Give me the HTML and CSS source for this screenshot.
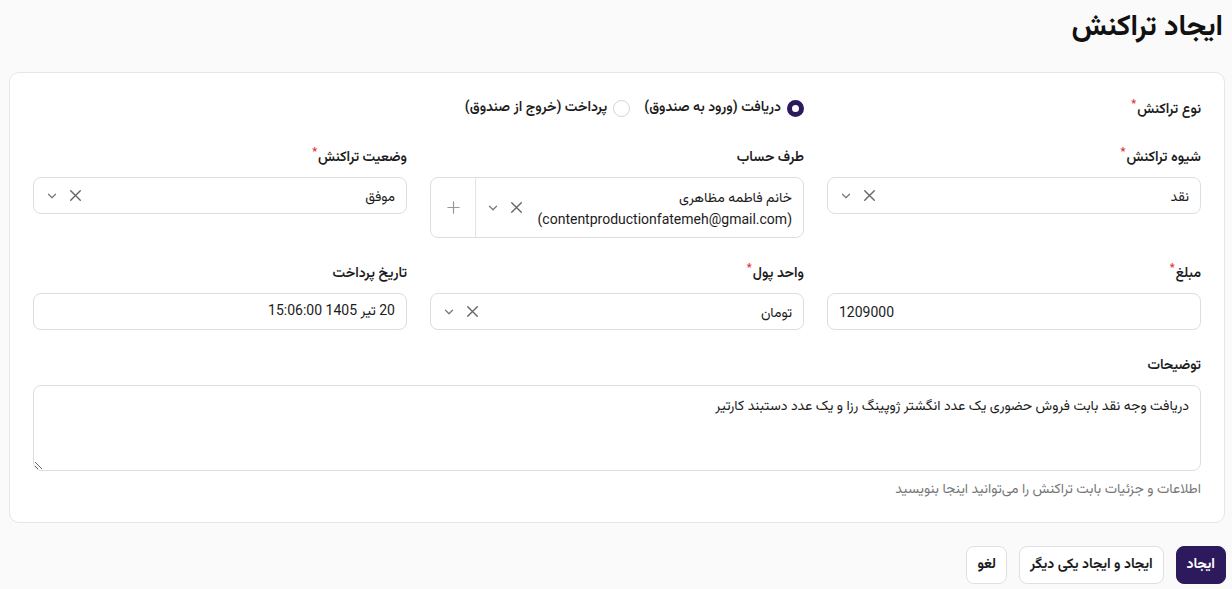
FILE: index.html
```html
<!DOCTYPE html>
<html lang="fa" dir="rtl">
<head>
  <meta charset="UTF-8" />
  <meta name="viewport" content="width=device-width, initial-scale=1.0" />
  <title>ایجاد تراکنش</title>
  <link rel="stylesheet" href="styles.css">
</head>
<body>
  <div class="page">
    <h1 class="page-title">ایجاد تراکنش</h1>

    <form class="card">
      <!-- نوع تراکنش -->
      <div class="type-row">
        <label class="field-label req">نوع تراکنش</label>
        <div class="radios">
          <span class="radio checked"><span class="dot"></span>دریافت (ورود به صندوق)</span>
          <span class="radio"><span class="dot"></span>پرداخت (خروج از صندوق)</span>
        </div>
      </div>

      <div class="grid">
        <div class="field">
          <label class="field-label req">شیوه تراکنش</label>
          <div class="select">
            <span class="value">نقد</span>
            <span class="icons">
              <svg class="x" viewBox="0 0 16 16"><path d="M3.5 3.5l9 9M12.5 3.5l-9 9"/></svg>
              <svg class="chev" viewBox="0 0 16 16"><path d="M4 6l4 4 4-4"/></svg>
            </span>
          </div>
        </div>

        <div class="field">
          <label class="field-label">طرف حساب</label>
          <div class="select tall">
            <span class="value">خانم فاطمه مظاهری<br>(contentproductionfatemeh@gmail.com)</span>
            <span class="icons">
              <svg class="x" viewBox="0 0 16 16"><path d="M3.5 3.5l9 9M12.5 3.5l-9 9"/></svg>
              <svg class="chev" viewBox="0 0 16 16"><path d="M4 6l4 4 4-4"/></svg>
            </span>
            <span class="addon">
              <svg class="plus" viewBox="0 0 16 16"><path d="M8 2v12M2 8h12"/></svg>
            </span>
          </div>
        </div>

        <div class="field">
          <label class="field-label req">وضعیت تراکنش</label>
          <div class="select">
            <span class="value">موفق</span>
            <span class="icons">
              <svg class="x" viewBox="0 0 16 16"><path d="M3.5 3.5l9 9M12.5 3.5l-9 9"/></svg>
              <svg class="chev" viewBox="0 0 16 16"><path d="M4 6l4 4 4-4"/></svg>
            </span>
          </div>
        </div>

        <div class="field">
          <label class="field-label req">مبلغ</label>
          <div class="input ltr">1209000</div>
        </div>

        <div class="field">
          <label class="field-label req">واحد پول</label>
          <div class="select">
            <span class="value">تومان</span>
            <span class="icons">
              <svg class="x" viewBox="0 0 16 16"><path d="M3.5 3.5l9 9M12.5 3.5l-9 9"/></svg>
              <svg class="chev" viewBox="0 0 16 16"><path d="M4 6l4 4 4-4"/></svg>
            </span>
          </div>
        </div>

        <div class="field">
          <label class="field-label">تاریخ پرداخت</label>
          <div class="input">20 تیر 1405 15:06:00</div>
        </div>
      </div>

      <div class="field desc">
        <label class="field-label">توضیحات</label>
        <textarea class="textarea">دریافت وجه نقد بابت فروش حضوری یک عدد انگشتر ژوپینگ رزا و یک عدد دستبند کارتیر</textarea>
        <p class="help">اطلاعات و جزئیات بابت تراکنش را می‌توانید اینجا بنویسید</p>
      </div>
    </form>

    <div class="actions">
      <button class="btn primary">ایجاد</button>
      <button class="btn">ایجاد و ایجاد یکی دیگر</button>
      <button class="btn">لغو</button>
    </div>
  </div>
</body>
</html>
```

FILE: styles.css
```css
* {
  box-sizing: border-box;
}

body {
  margin: 0;
  background: #fafafa;
  color: #1c1c1c;
  font-family: Roboto, Vazirmatn, "Noto Sans Arabic", "Noto Naskh Arabic", "DejaVu Sans", sans-serif;
  font-size: 14px;
}

.page {
  padding: 0 7px 0 9px;
}

.page-title {
  margin: 0;
  padding: 5px 2px 0 0;
  height: 72px;
  line-height: 40px;
  font-size: 29px;
  font-weight: 700;
  color: #111;
}

.card {
  background: #fff;
  border: 1px solid #e6e6e6;
  border-radius: 10px;
  padding: 18px 23px 25px 23px;
}

.field-label {
  display: block;
  font-size: 14px;
  line-height: 20px;
  font-weight: 600;
  color: #1c1c1c;
  margin-bottom: 11px;
}

.req::after {
  content: "*";
  color: #e03131;
  font-size: 11px;
  line-height: 1;
  vertical-align: top;
  margin-right: 1px;
}

.type-row {
  display: grid;
  grid-template-columns: 397px 1fr;
  align-items: center;
  height: 34px;
  margin-bottom: 21px;
}

.type-row .field-label {
  margin: 0;
}

.radios {
  display: flex;
  gap: 14px;
  font-size: 14px;
  font-weight: 600;
}

.radio {
  display: flex;
  align-items: center;
  gap: 6px;
}

.radio .dot {
  width: 17px;
  height: 17px;
  border-radius: 50%;
  border: 1px solid #d4d4d4;
  background: #fff;
}

.radio.checked .dot {
  border: 5px solid #2c1a5c;
  background: #fff;
}

.grid {
  display: grid;
  grid-template-columns: repeat(3, 1fr);
  column-gap: 23px;
  row-gap: 24px;
  align-items: start;
}

.select,
.input {
  display: flex;
  align-items: center;
  height: 37px;
  border: 1px solid #dedede;
  border-radius: 8px;
  background: #fff;
  padding: 0 11px;
  font-size: 14px;
}

.input.ltr {
  direction: ltr;
}

.select .value {
  flex: 1;
  line-height: 22px;
}

.select .icons {
  display: flex;
  align-items: center;
  gap: 8px;
}

.select svg {
  fill: none;
  stroke-linecap: round;
  stroke-linejoin: round;
}

.select .x {
  width: 17px;
  height: 17px;
  stroke: #666;
  stroke-width: 1.3;
}

.select .chev {
  width: 14px;
  height: 14px;
  stroke: #777;
  stroke-width: 1.4;
}

.select.tall {
  height: 61px;
  padding-left: 0;
  align-items: stretch;
}

.select.tall .value,
.select.tall .icons {
  align-self: center;
}

.select.tall .icons {
  margin-left: 10px;
}

.addon {
  display: flex;
  align-items: center;
  justify-content: center;
  width: 45px;
  border-right: 1px solid #e3e3e3;
}

.plus {
  width: 15px;
  height: 15px;
  stroke: #999;
  stroke-width: 1.3;
}

.desc {
  margin-top: 24px;
}

.textarea {
  display: block;
  width: 100%;
  height: 86px;
  border: 1px solid #dedede;
  border-radius: 8px;
  padding: 8px 11px;
  font-family: inherit;
  font-size: 14px;
  color: #1c1c1c;
  line-height: 22px;
  resize: vertical;
}

.help {
  margin: 8px 0 0;
  font-size: 14px;
  line-height: 18px;
  color: #777;
}

.actions {
  display: flex;
  gap: 12px;
  padding-top: 23px;
  margin-right: -1px;
}

.btn {
  height: 38px;
  padding: 0 10px;
  border: 1px solid #e0e0e0;
  border-radius: 8px;
  background: #fff;
  color: #1c1c1c;
  font-family: inherit;
  font-size: 14px;
  font-weight: 700;
}

.btn.primary {
  background: #2c1a5c;
  border-color: #2c1a5c;
  color: #fff;
}
```
